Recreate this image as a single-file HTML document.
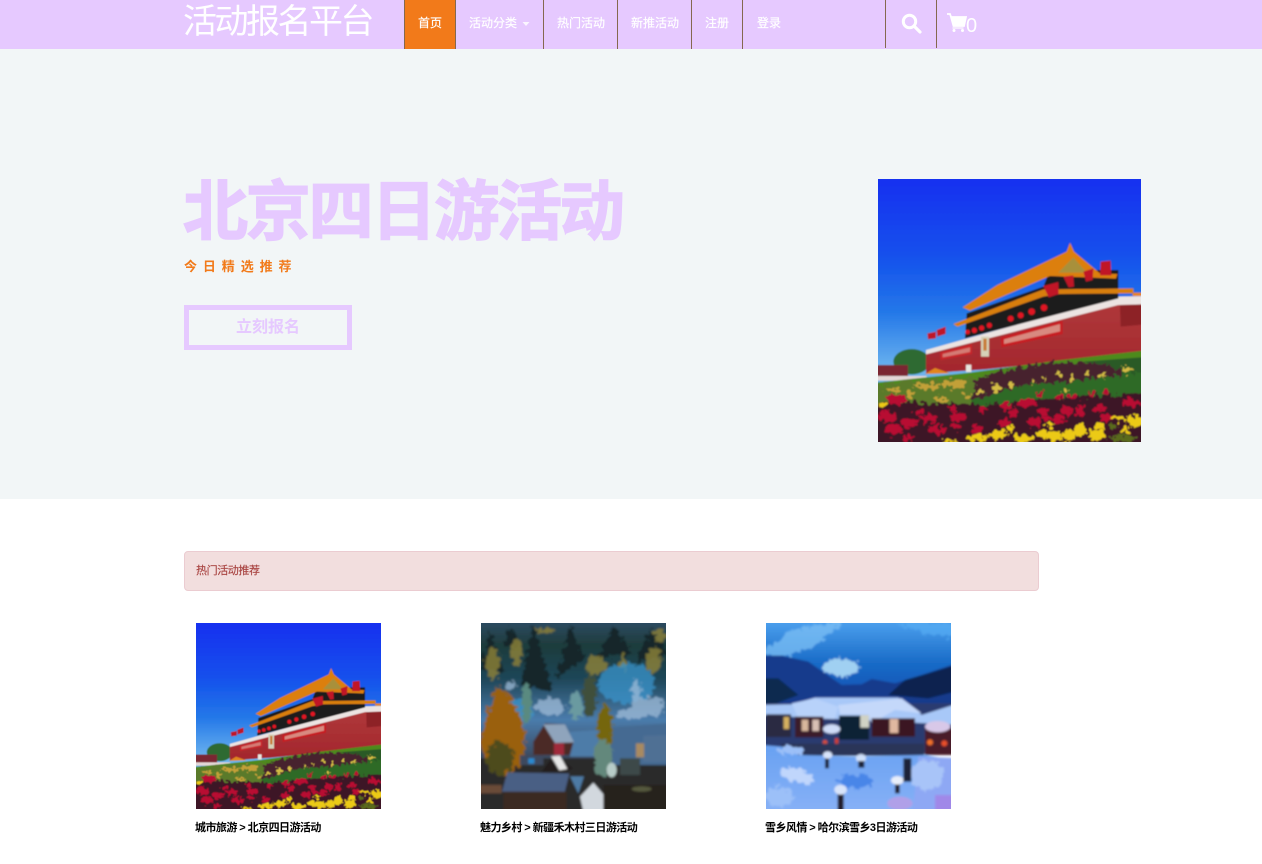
<!DOCTYPE html>
<html lang="zh-CN">
<head>
<meta charset="utf-8">
<title>活动报名平台</title>
<style>
html,body{margin:0;padding:0;background:#fff;}
body{width:1262px;height:864px;position:relative;overflow:hidden;font-family:"Liberation Sans","Noto Sans CJK SC",sans-serif;}
.a{position:absolute;white-space:nowrap;}
.nav{left:0;top:0;width:1262px;height:49px;background:#e6c9ff;}
.line{position:absolute;top:0;width:1px;height:49px;background:#85684f;}
.n{position:absolute;top:15px;font-size:12px;line-height:16px;color:#fff;white-space:nowrap;-webkit-text-stroke:.2px #fff;}
.cap{position:absolute;top:821px;font-size:11px;line-height:14px;font-weight:700;color:#000;white-space:nowrap;letter-spacing:-.55px;}
.thumb{position:absolute;top:622px;width:186px;height:187px;display:block;}
</style>
</head>
<body>
<svg width="0" height="0" style="position:absolute">
<defs>
<filter id="b" x="0" y="0" width="1" height="1"><feGaussianBlur stdDeviation="2.600"/></filter>
<filter id="c" x="0" y="0" width="1" height="1"><feGaussianBlur stdDeviation="3.500"/></filter>
<filter id="w" filterUnits="userSpaceOnUse" x="0" y="0" width="840" height="840"><feTurbulence type="fractalNoise" baseFrequency=".07" numOctaves="2" seed="4" result="n"/><feDisplacementMap in="SourceGraphic" in2="n" scale="34" xChannelSelector="R" yChannelSelector="G"/></filter>
<linearGradient id="sky" gradientUnits="userSpaceOnUse" x1="0" y1="27" x2="0" y2="600"><stop offset="0" stop-color="#1230f0"/><stop offset=".4" stop-color="#1450ec"/><stop offset=".7" stop-color="#2478e8"/><stop offset="1" stop-color="#6cb4ee"/></linearGradient>
<linearGradient id="wall" x1="0" y1="0" x2="0" y2="1"><stop offset="0" stop-color="#b03a3c"/><stop offset="1" stop-color="#a3262c"/></linearGradient>
<linearGradient id="sky2" gradientUnits="userSpaceOnUse" x1="0" y1="24" x2="0" y2="220"><stop offset="0" stop-color="#4a9eec"/><stop offset=".6" stop-color="#1a6cc8"/><stop offset="1" stop-color="#1058b8"/></linearGradient>
<linearGradient id="snow" gradientUnits="userSpaceOnUse" x1="0" y1="400" x2="0" y2="582"><stop offset="0" stop-color="#6aa2f2"/><stop offset="1" stop-color="#86b0f6"/></linearGradient>
<linearGradient id="forest" gradientUnits="userSpaceOnUse" x1="0" y1="24" x2="0" y2="582"><stop offset="0" stop-color="#2c4a60"/><stop offset=".12" stop-color="#1e3c3c"/><stop offset=".3" stop-color="#1f4658"/><stop offset=".52" stop-color="#4a7cac"/><stop offset=".72" stop-color="#3a4a60"/><stop offset="1" stop-color="#28262a"/></linearGradient>

<symbol id="gate" viewBox="24 27 789 789" preserveAspectRatio="none">
<g filter="url(#b)">
<rect x="0" y="0" width="840" height="840" fill="url(#sky)"/>
<ellipse cx="125" cy="575" rx="55" ry="38" fill="#2d6a33"/>
<rect x="0" y="585" width="114" height="45" fill="#7a2530"/>
<rect x="0" y="618" width="170" height="14" fill="#e4d8d8"/>
<polygon points="168,548 745,385 840,378 840,548 345,598 168,610" fill="url(#wall)"/>
<polygon points="750,405 840,402 840,462 752,470" fill="#8d2026"/>
<polygon points="168,540 740,380 840,378 840,402 745,405 168,553" fill="#ece4e2"/>
<polygon points="285,505 745,385 745,300 540,300 520,350 290,430" fill="#1d1a1e"/>
<polygon points="250,462 520,358 790,355 790,370 570,372 520,380 262,470" fill="#d87e10"/>
<polygon points="278,412 382,345 590,245 600,218 612,245 690,310 742,312 738,326 540,318 300,422" fill="#dc7f10"/>
<polygon points="565,308 610,262 650,308" fill="#a8903a"/>
<rect x="788" y="368" width="52" height="10" fill="#e8841a"/>
<g fill="#e01622"><circle cx="293" cy="486" r="7"/><circle cx="313" cy="481" r="8"/><circle cx="335" cy="474" r="8"/><circle cx="358" cy="466" r="8"/><circle cx="422" cy="446" r="9"/><circle cx="452" cy="436" r="9"/><circle cx="485" cy="425" r="10"/><circle cx="522" cy="413" r="10"/></g>
<g fill="#c01228"><polygon points="692,275 722,272 724,316 690,316"/><polygon points="520,348 565,336 566,372 536,382"/><polygon points="580,320 610,316 612,350 596,352"/><polygon points="640,305 670,295 668,330 648,335"/><polygon points="172,490 198,485 198,505 174,508"/><polygon points="200,480 227,470 227,492 202,500"/></g>
<polygon points="392,502 578,452 578,492 394,532" fill="#c81a22"/>
<polygon points="402,508 570,462 570,484 402,522" fill="#d88a80"/>
<polygon points="210,548 306,522 306,552 212,570" fill="#c8252c"/>
<polygon points="218,552 300,532 300,546 218,562" fill="#d47c74"/>
<rect x="333" y="500" width="24" height="60" fill="#d6d2b8"/>
<rect x="340" y="506" width="10" height="36" fill="#c87a30"/>
<polygon points="165,612 195,594 240,610" fill="#e2861e"/>
<rect x="288" y="584" width="16" height="22" fill="#e8e6e0"/>
<polygon points="0,640 300,608 560,572 840,540 840,840 0,840" fill="#4e8a1e"/>
<polygon points="640,575 840,560 840,640 760,620" fill="#2c5a26"/>
<g filter="url(#w)">
<polygon points="290,640 380,606 530,578 690,578 750,600 770,650 500,700 310,700" fill="#47222f"/>
<polygon points="-20,650 150,628 320,620 300,710 -20,720" fill="#5a7a2c"/>
<polygon points="310,690 480,640 560,640 860,600 860,700 300,710" fill="#2f6a26"/>
<polygon points="-20,695 200,700 330,705 500,690 860,665 860,860 -20,860" fill="#3d1226"/>
<g fill="#c2a038"><ellipse cx="180" cy="650" rx="30" ry="10"/><ellipse cx="250" cy="642" rx="34" ry="12"/><ellipse cx="70" cy="660" rx="24" ry="7"/><ellipse cx="215" cy="688" rx="22" ry="9"/><ellipse cx="120" cy="672" rx="12" ry="14"/><ellipse cx="150" cy="645" rx="18" ry="8"/><ellipse cx="290" cy="678" rx="12" ry="8"/></g>
<g fill="#d4bc44"><ellipse cx="378" cy="656" rx="11" ry="14"/><ellipse cx="330" cy="664" rx="8" ry="6"/><ellipse cx="492" cy="634" rx="7" ry="8"/><ellipse cx="425" cy="645" rx="9" ry="9"/><ellipse cx="565" cy="614" rx="9" ry="7"/><ellipse cx="606" cy="622" rx="8" ry="10"/><ellipse cx="652" cy="610" rx="8" ry="7"/><ellipse cx="700" cy="614" rx="12" ry="8"/><ellipse cx="772" cy="600" rx="14" ry="12"/><ellipse cx="522" cy="626" rx="5" ry="9"/><ellipse cx="585" cy="660" rx="8" ry="6"/></g>
<g fill="#b80c30"><ellipse cx="78" cy="688" rx="30" ry="14"/><ellipse cx="50" cy="740" rx="28" ry="15"/><ellipse cx="175" cy="745" rx="28" ry="12"/><ellipse cx="265" cy="740" rx="26" ry="12"/><ellipse cx="470" cy="698" rx="30" ry="12"/><ellipse cx="408" cy="708" rx="16" ry="12"/><ellipse cx="510" cy="674" rx="13" ry="8"/><ellipse cx="565" cy="680" rx="13" ry="8"/><ellipse cx="610" cy="680" rx="13" ry="8"/><ellipse cx="665" cy="672" rx="13" ry="7"/><ellipse cx="710" cy="668" rx="13" ry="7"/><ellipse cx="785" cy="698" rx="26" ry="13"/><ellipse cx="690" cy="715" rx="18" ry="12"/><ellipse cx="590" cy="722" rx="18" ry="14"/><ellipse cx="630" cy="722" rx="15" ry="14"/><ellipse cx="565" cy="750" rx="20" ry="12"/><ellipse cx="710" cy="742" rx="22" ry="10"/><ellipse cx="490" cy="755" rx="20" ry="13"/><ellipse cx="405" cy="760" rx="18" ry="12"/><ellipse cx="200" cy="780" rx="24" ry="14"/><ellipse cx="120" cy="760" rx="26" ry="12"/><ellipse cx="70" cy="780" rx="28" ry="13"/><ellipse cx="320" cy="778" rx="18" ry="12"/><ellipse cx="115" cy="805" rx="22" ry="8"/><ellipse cx="340" cy="715" rx="14" ry="10"/><ellipse cx="145" cy="725" rx="16" ry="9"/><ellipse cx="520" cy="725" rx="16" ry="11"/><ellipse cx="430" cy="730" rx="16" ry="10"/><ellipse cx="250" cy="718" rx="14" ry="9"/><ellipse cx="530" cy="745" rx="16" ry="9"/><ellipse cx="260" cy="770" rx="16" ry="10"/></g>
<g fill="#ecca18"><ellipse cx="240" cy="815" rx="22" ry="6"/><ellipse cx="36" cy="705" rx="13" ry="7"/><ellipse cx="325" cy="803" rx="32" ry="11"/><ellipse cx="385" cy="795" rx="30" ry="14"/><ellipse cx="420" cy="775" rx="12" ry="9"/><ellipse cx="460" cy="805" rx="30" ry="12"/><ellipse cx="518" cy="790" rx="16" ry="16"/><ellipse cx="550" cy="798" rx="24" ry="16"/><ellipse cx="610" cy="790" rx="32" ry="12"/><ellipse cx="632" cy="778" rx="18" ry="14"/><ellipse cx="680" cy="795" rx="26" ry="16"/><ellipse cx="690" cy="768" rx="18" ry="10"/><ellipse cx="765" cy="782" rx="14" ry="9"/><ellipse cx="745" cy="745" rx="26" ry="8"/><ellipse cx="795" cy="755" rx="22" ry="18"/><ellipse cx="590" cy="800" rx="16" ry="14"/><ellipse cx="540" cy="765" rx="10" ry="8"/></g>
<g fill="#5a6a1c"><ellipse cx="760" cy="805" rx="44" ry="10"/><ellipse cx="730" cy="770" rx="12" ry="8"/></g>
</g>
</g>
</symbol>

<symbol id="village" viewBox="33 24 555 558" preserveAspectRatio="none">
<g filter="url(#c)">
<rect x="0" y="0" width="620" height="620" fill="url(#forest)"/>
<g filter="url(#w)">
<g fill="#14282a"><polygon points="60,40 100,170 30,160"/><polygon points="190,30 250,230 150,210"/><polygon points="300,30 345,130 260,190"/><polygon points="430,30 490,120 380,130"/><polygon points="540,40 600,120 500,140"/><polygon points="120,30 150,90 100,90"/></g>
<g fill="#8f8438" opacity=".8"><ellipse cx="140" cy="110" rx="16" ry="40"/><ellipse cx="378" cy="150" rx="32" ry="28"/><ellipse cx="550" cy="135" rx="24" ry="38"/><ellipse cx="225" cy="45" rx="30" ry="8"/><ellipse cx="68" cy="145" rx="22" ry="46"/><ellipse cx="460" cy="140" rx="10" ry="28"/><ellipse cx="570" cy="60" rx="18" ry="22"/></g>
<g fill="#3a94cc" opacity=".75"><ellipse cx="470" cy="205" rx="85" ry="60"/><ellipse cx="130" cy="290" rx="60" ry="40"/></g>
<g fill="#a0bcd8" opacity=".75"><ellipse cx="535" cy="275" rx="48" ry="30"/><ellipse cx="240" cy="275" rx="46" ry="26"/><ellipse cx="125" cy="212" rx="20" ry="11"/><ellipse cx="480" cy="296" rx="40" ry="14"/><ellipse cx="500" cy="225" rx="14" ry="35"/></g>
<ellipse cx="170" cy="265" rx="15" ry="60" fill="#5a8a80"/>
<ellipse cx="318" cy="275" rx="18" ry="42" fill="#6a9aa0"/>
<ellipse cx="360" cy="240" rx="20" ry="70" fill="#40503a"/>
</g>
<rect x="0" y="430" width="620" height="190" fill="#2a292c"/>
<polygon points="380,340 600,325 600,450 380,450" fill="#446a92"/>
<polygon points="300,350 385,345 385,425 300,425" fill="#4e7ca8"/>
<polygon points="190,380 225,325 285,328 310,382 300,420 190,420" fill="#4c2a28"/>
<polygon points="220,328 285,328 312,382 255,384" fill="#8fa4bc"/>
<rect x="252" y="385" width="30" height="35" fill="#a02a3a"/>
<polygon points="520,362 600,360 600,440 518,442" fill="#4f6f94"/>
<rect x="498" y="385" width="24" height="42" fill="#a88a60"/>
<g filter="url(#w)">
<polygon points="30,400 50,300 80,215 125,245 165,345 160,440 110,490 40,420" fill="#9a600c"/>
<ellipse cx="90" cy="430" rx="40" ry="50" fill="#4e4c1c"/>
<ellipse cx="404" cy="335" rx="24" ry="68" fill="#74660e"/>
<ellipse cx="398" cy="430" rx="26" ry="56" fill="#64887c"/>
</g>
<ellipse cx="425" cy="465" rx="15" ry="22" fill="#b8ccc8"/>
<rect x="150" y="420" width="70" height="30" fill="#3c4a5e"/>
<polygon points="215,470 250,422 310,460 290,468" fill="#211c1e"/>
<polygon points="243,424 270,422 292,462 268,466" fill="#e6e6e6"/>
<polygon points="112,472 298,476 278,555 96,530" fill="#4a5e84"/>
<rect x="100" y="530" width="190" height="60" fill="#3a2a24"/>
<polygon points="300,484 342,484 325,535" fill="#4e7aa4"/>
<polygon points="330,545 370,503 415,555 415,590 340,590" fill="#d2d8de"/>
<rect x="450" y="430" width="60" height="50" fill="#3e4a48"/>
<rect x="0" y="510" width="95" height="25" fill="#6a4c38"/>
<rect x="175" y="430" width="18" height="16" fill="#2a8ad0"/>
<rect x="400" y="510" width="210" height="90" fill="#27231f"/>
<ellipse cx="515" cy="522" rx="30" ry="8" fill="#55583c"/>
</g>
</symbol>

<symbol id="snowv" viewBox="33 24 555 558" preserveAspectRatio="none">
<g filter="url(#c)">
<rect x="0" y="0" width="620" height="300" fill="url(#sky2)"/>
<g filter="url(#w)">
<polygon points="20,110 120,40 270,20 170,100 60,130" fill="#7cc0f6" opacity=".75"/>
<polygon points="420,24 620,24 620,70 520,60" fill="#54aaf2" opacity=".8"/>
<ellipse cx="260" cy="158" rx="55" ry="26" fill="#a0d0f2"/>
</g>
<polygon points="0,122 80,122 160,140 260,210 320,208 350,192 420,205 500,180 620,140 620,270 0,270" fill="#123a8c"/>
<polygon points="0,190 70,190 130,240 0,290" fill="#0c2b50"/>
<polygon points="400,240 450,195 520,175 620,145 620,225 520,250" fill="#0a2450"/>
<rect x="0" y="265" width="620" height="150" fill="#2a3a70"/>
<polygon points="0,270 110,268 180,248 430,248 500,300 620,262 620,330 0,300" fill="#a8c8f8"/>
<polygon points="110,265 180,250 250,275 240,312 130,310" fill="#b8d2fa"/>
<polygon points="250,270 440,250 500,295 420,285 350,325 340,298 255,298" fill="#c4d8fa"/>
<rect x="33" y="298" width="75" height="68" fill="#2a2c42"/>
<rect x="120" y="305" width="85" height="62" fill="#3a1a2c"/>
<rect x="140" y="314" width="20" height="34" fill="#d8b89c"/>
<rect x="172" y="314" width="20" height="34" fill="#d8c0b4"/>
<rect x="86" y="306" width="16" height="36" fill="#d4b060"/>
<rect x="252" y="302" width="90" height="72" fill="#0c2434"/>
<rect x="316" y="300" width="26" height="38" fill="#d0d2c4"/>
<rect x="350" y="310" width="130" height="55" fill="#3a1624"/>
<rect x="404" y="312" width="26" height="42" fill="#e0b8a0"/>
<rect x="510" y="340" width="110" height="80" fill="#4a1a2c"/>
<ellipse cx="548" cy="335" rx="38" ry="17" fill="#d8c8e8"/>
<ellipse cx="230" cy="342" rx="26" ry="14" fill="#cfdcf8"/>
<circle cx="525" cy="382" r="9" fill="#f0702a"/><circle cx="568" cy="385" r="9" fill="#e8502a"/><circle cx="210" cy="382" r="7" fill="#d8503a"/>
<rect x="240" y="370" width="10" height="50" fill="#d04030"/>
<rect x="78" y="386" width="430" height="36" fill="#2a3658"/>
<polygon points="0,388 80,395 130,420 300,424 510,420 620,440 620,620 0,620" fill="url(#snow)"/>
<polygon points="490,425 620,430 620,620 470,620" fill="#8ea8f4"/>
<g filter="url(#w)">
<ellipse cx="125" cy="482" rx="55" ry="20" fill="#c0d6fc" transform="rotate(14 125 482)"/>
<ellipse cx="300" cy="500" rx="55" ry="20" fill="#4a86e8"/>
<ellipse cx="515" cy="480" rx="50" ry="45" fill="#a8c4f8"/>
<ellipse cx="70" cy="545" rx="42" ry="30" fill="#9cc0f8"/>
<ellipse cx="110" cy="405" rx="40" ry="14" fill="#9cc0f8"/>
</g>
<rect x="248" y="530" width="18" height="60" fill="#241c2c"/>
<ellipse cx="257" cy="524" rx="19" ry="15" fill="#d8e4fa"/>
<rect x="420" y="505" width="14" height="30" fill="#241c2c"/>
<ellipse cx="427" cy="496" rx="19" ry="13" fill="#e8eefa"/>
<rect x="445" y="430" width="24" height="70" fill="#1a2038"/>
<rect x="210" y="430" width="12" height="30" fill="#1a1c30"/>
<ellipse cx="218" cy="420" rx="14" ry="11" fill="#d8e4fa"/>
<ellipse cx="318" cy="430" rx="15" ry="13" fill="#cfe0fa"/>
<rect x="310" y="438" width="18" height="20" fill="#1a2038"/>
<ellipse cx="435" cy="565" rx="38" ry="20" fill="#b0a0e8"/>
<rect x="540" y="540" width="80" height="80" fill="#a088e8"/>
</g>
</symbol>
</defs>
</svg>

<div class="a nav">
<div class="a" style="left:183px;top:0;font-size:34px;line-height:42px;color:#fff;letter-spacing:-2.5px;transform:translateY(1px);">活动报名平台</div>
<div style="position:absolute;left:405px;top:0;width:50px;height:49px;background:#f27a1a;"></div>
<i class="line" style="left:404px"></i><i class="line" style="left:455px"></i><i class="line" style="left:543px"></i><i class="line" style="left:617px"></i><i class="line" style="left:691px"></i><i class="line" style="left:742px"></i>
<i class="line" style="left:885px;height:48px"></i><i class="line" style="left:936px;height:48px"></i>
<span class="n" style="left:418px">首页</span>
<span class="n" style="left:469px">活动分类</span>
<svg style="position:absolute;left:522px;top:22px" width="8" height="4"><polygon points="0.5,0 7.5,0 4,4" fill="#fbf5ff"/></svg>
<span class="n" style="left:557px">热门活动</span>
<span class="n" style="left:631px">新推活动</span>
<span class="n" style="left:705px">注册</span>
<span class="n" style="left:757px">登录</span>
<svg style="position:absolute;left:901px;top:13px" width="21" height="21" viewBox="0 0 21 21"><circle cx="8.500" cy="8.500" r="6.200" fill="none" stroke="#fff" stroke-width="3"/><line x1="13" y1="13" x2="19" y2="19" stroke="#fff" stroke-width="3.200" stroke-linecap="round"/></svg>
<svg style="position:absolute;left:946px;top:12px" width="21" height="21" viewBox="0 0 21 21"><path d="M1 2h3l1 3h15l-2 9H7.500L4.600 3.600" fill="none" stroke="#fff" stroke-width="1.800"/><path d="M5 5h15l-2 8.500H7.200z" fill="#fff"/><path d="M6.500 16h11" stroke="#fff" stroke-width="1.200"/><circle cx="8" cy="18.500" r="1.500" fill="#fff"/><circle cx="16.500" cy="18.500" r="1.500" fill="#fff"/></svg>
<div class="a" style="left:966px;top:15px;font-size:20px;line-height:23px;color:#fff;">0</div>
</div>

<div class="a" style="left:0;top:49px;width:1262px;height:450px;background:#f2f6f7;"></div>
<div class="a" style="left:183px;top:169px;font-size:65px;line-height:86px;font-weight:700;color:#e6c9ff;letter-spacing:-2.200px;-webkit-text-stroke:1.600px #e6c9ff;">北京四日游活动</div>
<div class="a" style="left:184px;top:258px;font-size:13px;line-height:17px;font-weight:700;color:#f27a1a;letter-spacing:5.900px;">今日精选推荐</div>
<div class="a" style="left:184px;top:305px;width:158px;height:35px;border:5px solid #e6c9ff;text-align:center;font-size:16px;line-height:35px;font-weight:700;color:#e6c9ff;">立刻报名</div>
<svg class="a" style="left:878px;top:179px" width="263" height="263"><use href="#gate" width="263" height="263"/></svg>

<div class="a" style="left:184px;top:551px;width:853px;height:38px;background:#f2dede;border:1px solid #ebccd1;border-radius:4px;"></div>
<div class="a" style="left:196px;top:564px;font-size:11px;line-height:14px;color:#a94442;letter-spacing:-.4px;-webkit-text-stroke:.15px #a94442;">热门活动推荐</div>

<svg class="thumb" style="left:196px" viewBox="0 0 186 187"><use href="#gate" width="185" height="186" y="1"/></svg>
<svg class="thumb" style="left:481px" viewBox="0 0 186 187"><use href="#village" width="185" height="186" y="1"/></svg>
<svg class="thumb" style="left:766px" viewBox="0 0 186 187"><use href="#snowv" width="185" height="186" y="1"/></svg>
<div class="cap" style="left:195px">城市旅游 &gt; 北京四日游活动</div>
<div class="cap" style="left:480px">魅力乡村 &gt; 新疆禾木村三日游活动</div>
<div class="cap" style="left:765px">雪乡风情 &gt; 哈尔滨雪乡3日游活动</div>
</body>
</html>
